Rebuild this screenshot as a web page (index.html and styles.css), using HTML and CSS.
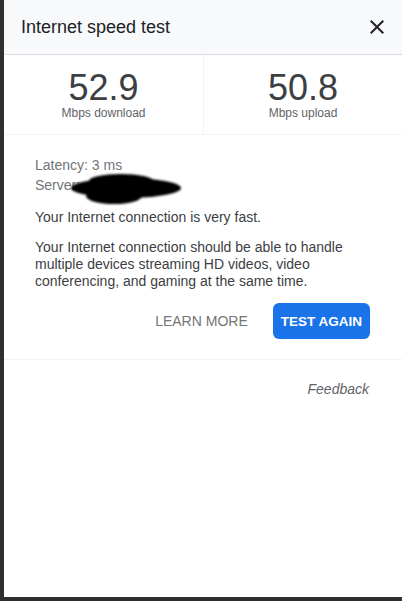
FILE: index.html
```html
<!DOCTYPE html>
<html>
<head>
<meta charset="utf-8">
<link rel="stylesheet" href="styles.css">
</head>
<body>
<div class="panel">
  <header class="head">
    <div class="title">Internet speed test</div>
    <svg class="close" width="24" height="24" viewBox="0 0 24 24"><path d="M19 6.41L17.59 5 12 10.59 6.41 5 5 6.41 10.59 12 5 17.59 6.41 19 12 13.41 17.59 19 19 17.59 13.41 12z" fill="#202124"/></svg>
  </header>
  <section class="speeds">
    <div class="speed left">
      <div class="num">52.9</div>
      <div class="unit">Mbps download</div>
    </div>
    <div class="speed">
      <div class="num">50.8</div>
      <div class="unit">Mbps upload</div>
    </div>
  </section>
  <section class="content">
    <div class="meta">Latency: 3 ms</div>
    <div class="meta">Server: </div>
    <p class="status">Your Internet connection is very fast.</p>
    <p class="desc">Your Internet connection should be able to handle multiple devices streaming HD videos, video conferencing, and gaming at the same time.</p>
    <div class="actions">
      <span class="learn">LEARN MORE</span>
      <span class="again">TEST AGAIN</span>
    </div>
  </section>
  <div class="feedback">Feedback</div>
  <svg class="blob" width="130" height="50" viewBox="0 0 130 50">
    <defs><filter id="b" x="-10%" y="-30%" width="120%" height="160%"><feGaussianBlur stdDeviation="0.8"/></filter></defs>
    <g fill="#000" filter="url(#b)">
      <ellipse cx="60" cy="21" rx="55" ry="10"/>
      <ellipse cx="55" cy="14" rx="32" ry="7"/>
      <ellipse cx="48" cy="29" rx="28" ry="8"/>
    </g>
  </svg>
</div>
</body>
</html>
```

FILE: styles.css
```css
html, body {
  margin: 0;
  padding: 0;
}
body {
  background: #2f2f2f;
  font-family: "Liberation Sans", Arial, sans-serif;
  width: 402px;
  height: 601px;
  overflow: hidden;
}
.panel {
  position: relative;
  margin-left: 4px;
  width: 398px;
  height: 597px;
  background: #fff;
  overflow: hidden;
}
.head {
  height: 54px;
  background: #f8f9fa;
  border-bottom: 1px solid #dadce0;
  display: flex;
  align-items: center;
  justify-content: space-between;
  padding: 0 13px 0 17px;
}
.title {
  font-size: 18px;
  color: #202124;
}
.close {
  display: block;
}
.speeds {
  display: grid;
  grid-template-columns: 200px 1fr;
  border-bottom: 1px solid #f1f3f4;
}
.speed {
  display: flex;
  flex-direction: column;
  align-items: center;
  padding: 15px 0 14px;
}
.speed.left {
  border-right: 1px solid #f1f3f4;
}
.num {
  font-size: 36px;
  line-height: 36px;
  color: #3c4043;
}
.unit {
  font-size: 12px;
  line-height: 14px;
  color: #5f6368;
}
.content {
  padding: 20px 32px 20px 31px;
  border-bottom: 1px solid #f1f3f4;
}
.meta {
  font-size: 14px;
  line-height: 20px;
  color: #70757a;
}
.status {
  margin: 12px 0 0;
  font-size: 14px;
  line-height: 20px;
  color: #3c4043;
}
.desc {
  margin: 12px 0 0;
  font-size: 14px;
  line-height: 17px;
  color: #3c4043;
}
.actions {
  display: flex;
  justify-content: flex-end;
  align-items: center;
  gap: 25px;
  margin-top: 13px;
}
.learn {
  font-size: 14px;
  color: #757575;
}
.again {
  display: flex;
  align-items: center;
  height: 36px;
  padding: 0 8px;
  border-radius: 6px;
  background: #1a73e8;
  color: #fff;
  font-size: 13.5px;
  font-weight: bold;
}
.feedback {
  text-align: right;
  padding: 19px 33px 0 0;
  font-size: 14px;
  line-height: 20px;
  font-style: italic;
  color: #5f6368;
}
.blob {
  position: absolute;
  left: 62px;
  top: 167px;
}
```
